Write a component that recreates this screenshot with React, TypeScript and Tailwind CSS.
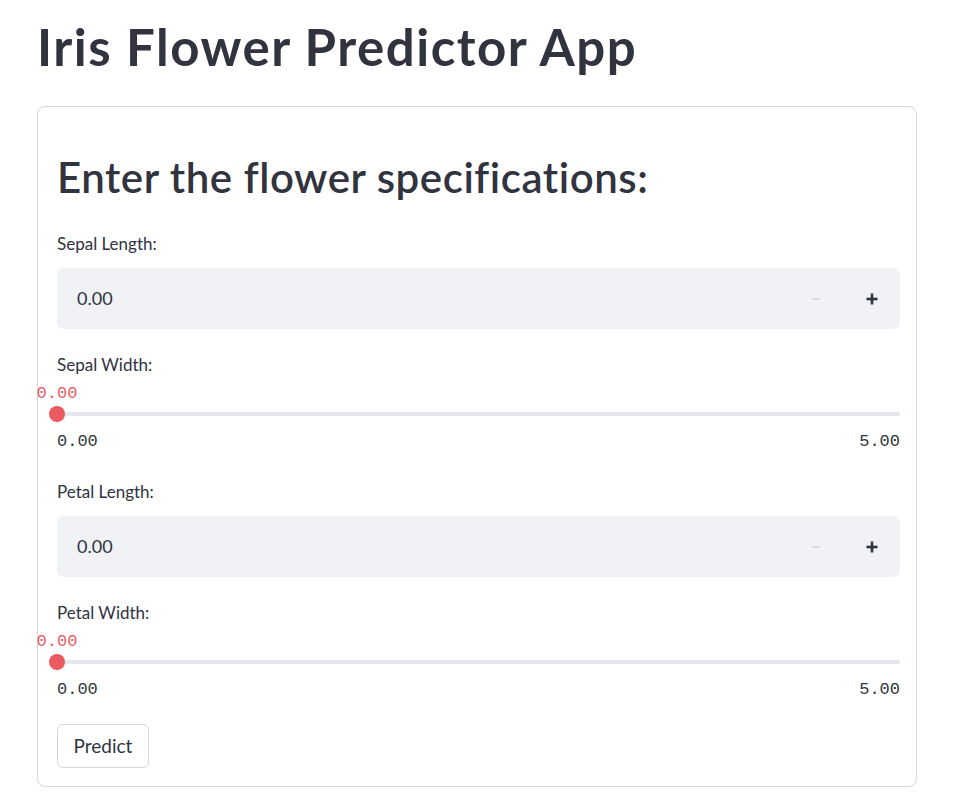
import React from "react";

const sans = "font-['Lato','Noto_Sans',sans-serif]";
const mono = "font-['Liberation_Mono','DejaVu_Sans_Mono',monospace]";

function NumberField({ label }: { label: string }) {
  return (
    <div className="flex flex-col">
      <div className="h-[20px] text-[17px] leading-[20px] text-[#31333f]">{label}</div>
      <div className="mt-[14px] flex h-[61px] items-center rounded-md bg-[#f0f2f6]">
        <div className="flex-1 pl-[20px] text-[18px] text-[#31333f]">0.00</div>
        <div className="flex h-full w-[56px] items-center justify-center">
          <svg width="10" height="10" viewBox="0 0 10 10">
            <line x1="1" y1="5" x2="9" y2="5" stroke="#d3d4d9" strokeWidth="1.5" />
          </svg>
        </div>
        <div className="flex h-full w-[56px] items-center justify-center">
          <svg width="12" height="12" viewBox="0 0 12 12">
            <line x1="0.5" y1="6" x2="11.5" y2="6" stroke="#31333f" strokeWidth="2.6" />
            <line x1="6" y1="0.5" x2="6" y2="11.5" stroke="#31333f" strokeWidth="2.6" />
          </svg>
        </div>
      </div>
    </div>
  );
}

function SliderField({ label }: { label: string }) {
  return (
    <div className="flex flex-col">
      <div className="h-[20px] text-[17px] leading-[20px] text-[#31333f]">{label}</div>
      <div className="relative mt-[9px] h-[20px]">
        <span className={`absolute left-0 -translate-x-1/2 text-[17px] leading-[20px] text-[#ea5a5e] ${mono}`}>
          0.00
        </span>
      </div>
      <div className="relative mt-[2px] flex h-[16px] items-center">
        <div className="h-[4px] w-full rounded-full bg-[#e6e7ee]" />
        <div className="absolute left-0 top-0 h-[16px] w-[16px] -translate-x-1/2 rounded-full bg-[#ea5a5e]" />
      </div>
      <div className={`mt-[10px] flex h-[20px] justify-between text-[17px] leading-[20px] text-[#31333f] ${mono}`}>
        <span>0.00</span>
        <span>5.00</span>
      </div>
    </div>
  );
}

export default function App() {
  return (
    <div className={`min-h-screen bg-white px-[37px] pt-[17px] ${sans}`}>
      <div className="w-[880px]">
        <h1 className="h-[60px] text-[51px] font-bold leading-[60px] tracking-[1.5px] text-[#31333f]">
          Iris Flower Predictor App
        </h1>
        <div className="mt-[29px] rounded-lg border border-[#d6d6d9] pb-[18px] pl-[19px] pr-[16px] pt-[45px]">
          <h2 className="h-[50px] text-[42px] font-semibold leading-[50px] tracking-[0.55px] text-[#31333f]">
            Enter the flower specifications:
          </h2>
          <div className="mt-[32px]">
            <NumberField label="Sepal Length:" />
          </div>
          <div className="mt-[26px]">
            <SliderField label="Sepal Width:" />
          </div>
          <div className="mt-[30px]">
            <NumberField label="Petal Length:" />
          </div>
          <div className="mt-[26px]">
            <SliderField label="Petal Width:" />
          </div>
          <button className="mt-[24px] h-[44px] w-[92px] rounded-md border border-[#d6d6d9] bg-white text-[19px] text-[#31333f]">
            Predict
          </button>
        </div>
      </div>
    </div>
  );
}
